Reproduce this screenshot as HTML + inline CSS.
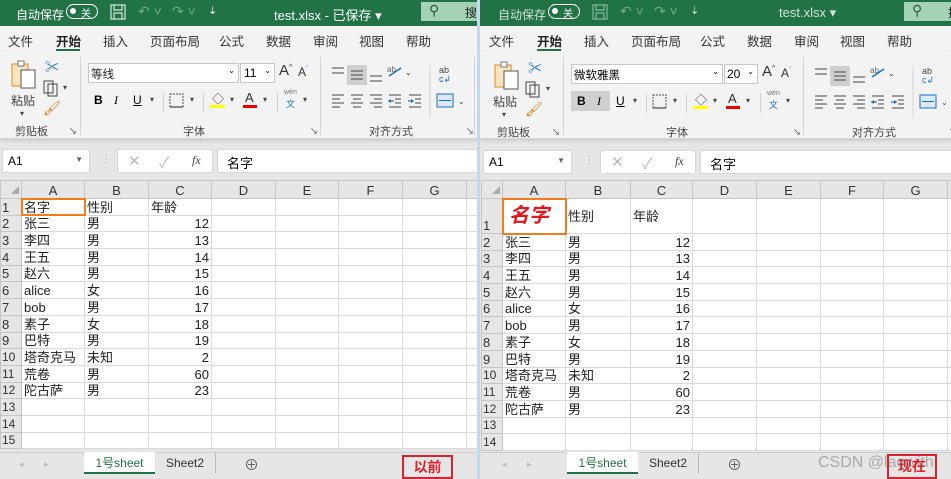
<!DOCTYPE html>
<html><head><meta charset="utf-8"><style>
*{margin:0;padding:0;box-sizing:border-box}
body{width:951px;height:479px;overflow:hidden;background:#fff;font-family:"Liberation Sans","Noto Sans CJK SC",sans-serif;position:relative}
.p{position:absolute;top:0;height:479px;overflow:hidden;background:#e6e6e6}
.a{position:absolute}
.title{left:0;top:0;height:26px;background:#217346;color:#fff;font-size:12px}
.tabs{top:26px;height:26px;background:#f3f3f3;font-size:12.5px;color:#333}
.rib{top:52px;height:87px;background:#f3f3f3;border-bottom:1px solid #d6d6d6;box-shadow:0 2px 3px #ccc}
.gl{font-size:11px;color:#444}
.sep{width:1px;background:#d4d4d4}
.box{background:#fff;border:1px solid #c8c8c8}
table{border-collapse:collapse;table-layout:fixed;position:absolute;left:0;top:180px;background:#fff;font-size:13px}
td{border:1px solid #dadada;padding:0 2px;white-space:nowrap;overflow:visible;color:#222;line-height:15px;vertical-align:bottom}
tr.h td{background:#e6e6e6;text-align:center;color:#333;border-color:#c6c6c6;font-size:13px}
td.r{background:#e6e6e6;text-align:left;color:#333;border-color:#c6c6c6;padding-left:1px}
td.n{text-align:right}
.tabbar{top:452px;height:27px;background:#e6e6e6;border-top:1px solid #cfcfcf}
.ic{stroke:#444;stroke-width:1;fill:none}
</style></head><body>

<!-- LEFT PANEL -->
<div class="p" style="left:0;width:477px">
 <div class="a title" style="width:477px">
  <span class="a" style="left:16px;top:6px">自动保存</span>
  <div class="a" style="left:66px;top:4px;width:32px;height:15px;border:1.5px solid #fff;border-radius:8px"><div class="a" style="left:3px;top:3px;width:6px;height:6px;background:#fff;border-radius:50%"></div><span class="a" style="left:14px;top:0;font-size:10px">关</span></div>
  <svg class="a" style="left:110px;top:4px" width="17" height="17"><rect x="1" y="1" width="14" height="14" fill="none" stroke="#fff"/><rect x="4" y="1" width="8" height="5" fill="none" stroke="#fff"/><rect x="4" y="9" width="8" height="6" fill="none" stroke="#fff"/></svg>
  <span class="a" style="left:138px;top:3px;color:#6fa889;font-size:14px">↶ ˅</span>
  <span class="a" style="left:172px;top:3px;color:#6fa889;font-size:14px">↷ ˅</span>
  <span class="a" style="left:208px;top:4px;font-size:11px">⇣</span>
  <span class="a" style="left:274px;top:5px;font-size:13px">test.xlsx - 已保存 ▾</span>
  <div class="a" style="left:421px;top:2px;width:60px;height:19px;background:#a4d2b5"><span class="a" style="left:8px;top:0;color:#2a5a3d;font-size:14px">⚲</span><span class="a" style="left:44px;top:2px;color:#222;font-size:12px">搜</span></div>
 </div>
 <div class="a tabs" style="left:0;width:477px">
  <span class="a" style="left:8px;top:5px">文件</span><span class="a" style="left:56px;top:5px;font-weight:bold;color:#222">开始</span>
  <div class="a" style="left:56px;top:23px;width:24px;height:2px;background:#217346"></div>
  <span class="a" style="left:103px;top:5px">插入</span><span class="a" style="left:150px;top:5px">页面布局</span><span class="a" style="left:219px;top:5px">公式</span><span class="a" style="left:266px;top:5px">数据</span><span class="a" style="left:313px;top:5px">审阅</span><span class="a" style="left:359px;top:5px">视图</span><span class="a" style="left:406px;top:5px">帮助</span>
 </div>
 <div class="a rib" style="left:0;width:477px">
  <svg class="a" style="left:10px;top:8px" width="28" height="30"><rect x="2" y="4" width="16" height="22" fill="#fbe3c1" stroke="#e08a1e"/><rect x="8" y="1" width="6" height="5" fill="#fff" stroke="#777"/><rect x="11" y="10" width="14" height="18" fill="#fff" stroke="#555"/></svg>
  <span class="a gl" style="left:11px;top:40px;font-size:12px">粘贴</span><span class="a gl" style="left:20px;top:57px;font-size:8px">▾</span>
  <span class="a" style="left:45px;top:5px;font-size:14px;color:#1e6ec0">✂</span>
  <svg class="a" style="left:43px;top:28px" width="16" height="17"><rect x="1" y="1" width="9" height="12" fill="#fff" class="ic"/><rect x="5" y="4" width="9" height="12" fill="#fff" class="ic"/></svg><span class="a gl" style="left:63px;top:31px;font-size:8px">▾</span>
  <span class="a" style="left:43px;top:48px;font-size:14px;color:#e07d12">🖌</span>
  <span class="a gl" style="left:15px;top:71px">剪贴板</span><span class="a gl" style="left:69px;top:74px;font-size:8px">↘</span>
  <div class="a sep" style="left:80px;top:5px;height:78px"></div>
  <div class="a box" style="left:88px;top:11px;width:151px;height:20px;font-size:11.5px;padding:2px 2px"><span style="color:#222">等线</span><span class="a" style="right:3px;top:2px;font-size:8px">⌄</span></div>
  <div class="a box" style="left:240px;top:11px;width:35px;height:20px;font-size:12px;padding:2px 3px">11<span class="a" style="right:3px;top:2px;font-size:8px">⌄</span></div>
  <span class="a" style="left:279px;top:10px;font-size:15px;color:#333">A<sup style="font-size:7px">^</sup></span><span class="a" style="left:298px;top:13px;font-size:12px;color:#333">A<sup style="font-size:7px;color:#1e6ec0">ˇ</sup></span>
  <span class="a" style="left:94px;top:41px;font-size:12px;font-weight:bold">B</span><span class="a" style="left:114px;top:41px;font-size:12px;font-style:italic;font-family:'Liberation Serif'">I</span><span class="a" style="left:133px;top:41px;font-size:12px;text-decoration:underline">U</span><span class="a gl" style="left:150px;top:43px;font-size:8px">▾</span>
  <div class="a sep" style="left:163px;top:40px;height:20px"></div>
  <svg class="a" style="left:169px;top:41px" width="16" height="16"><rect x="1" y="1" width="13" height="13" fill="none" stroke="#555" stroke-dasharray="2 1"/><path d="M1 14H14" stroke="#222"/></svg><span class="a gl" style="left:190px;top:43px;font-size:8px">▾</span>
  <div class="a sep" style="left:203px;top:40px;height:20px"></div>
  <span class="a" style="left:212px;top:38px;font-size:12px;color:#444">◇</span><div class="a" style="left:210px;top:53px;width:15px;height:3px;background:#ffff00"></div><span class="a gl" style="left:230px;top:43px;font-size:8px">▾</span>
  <span class="a" style="left:245px;top:38px;font-size:13px;color:#333">A</span><div class="a" style="left:243px;top:53px;width:14px;height:3px;background:#e00"></div><span class="a gl" style="left:263px;top:43px;font-size:8px">▾</span>
  <div class="a sep" style="left:277px;top:40px;height:20px"></div>
  <span class="a" style="left:284px;top:37px;font-size:7px;color:#777">wén</span><span class="a" style="left:286px;top:45px;font-size:9px;color:#1e6ec0">文</span><span class="a gl" style="left:303px;top:43px;font-size:8px">▾</span>
  <span class="a gl" style="left:183px;top:71px">字体</span><span class="a gl" style="left:310px;top:74px;font-size:8px">↘</span>
  <div class="a sep" style="left:320px;top:5px;height:78px"></div>
  <svg class="a" style="left:329px;top:10px" width="140" height="60">
   <path d="M3 6h12M3 11h12" stroke="#444"/>
   <rect x="18" y="3" width="20" height="20" fill="#cfcfcf"/><path d="M22 9h12M22 13h12M22 17h12" stroke="#444"/>
   <path d="M41 14h12M41 19h12" stroke="#444"/>
   <path d="M60 14l12-8" stroke="#1e6ec0" stroke-width="1.5"/><text x="58" y="10" font-size="8" fill="#666">ab</text><text x="76" y="13" font-size="8" fill="#444">⌄</text>
   <path d="M3 33h12M3 37h8M3 41h12M3 45h8" stroke="#444"/>
   <path d="M22 33h12M24 37h8M22 41h12M24 45h8" stroke="#444"/>
   <path d="M41 33h12M45 37h8M41 41h12M45 45h8" stroke="#444"/>
   <path d="M60 33h12M66 37h6M66 41h6M60 45h12M59 39h6" stroke="#444"/><path d="M59 39l3-2v4z" fill="#1e6ec0"/>
   <path d="M80 33h12M86 37h6M86 41h6M80 45h12M79 39h6" stroke="#444"/><path d="M85 39l-3-2v4z" fill="#1e6ec0"/>
   <path d="M101 3v52" stroke="#d4d4d4"/>
   <text x="110" y="11" font-size="9" fill="#444">ab</text><text x="110" y="20" font-size="9" fill="#1e6ec0">c↲</text>
   <rect x="108" y="32" width="16" height="13" fill="#dbe9f7" stroke="#1e6ec0"/><path d="M110 38.5h12" stroke="#1e6ec0"/><text x="129" y="42" font-size="8" fill="#444">⌄</text>
  </svg>
  <span class="a gl" style="left:369px;top:71px">对齐方式</span><span class="a gl" style="left:466px;top:74px;font-size:8px">↘</span>
  <div class="a sep" style="left:474px;top:5px;height:78px"></div>
 </div>
 <div class="a box" style="left:2px;top:149px;width:88px;height:24px;border-color:#d8d8d8;font-size:12px;padding:4px 5px">A1<span class="a" style="right:6px;top:5px;font-size:8px;color:#666">▼</span></div>
 <span class="a" style="left:101px;top:154px;color:#999;font-size:10px">⋮</span>
 <div class="a box" style="left:117px;top:149px;width:96px;height:24px;border-color:#d8d8d8"><span class="a" style="left:10px;top:2px;color:#bbb;font-size:15px">✕</span><span class="a" style="left:41px;top:2px;color:#bbb;font-size:15px">✓</span><span class="a" style="left:74px;top:3px;color:#444;font-size:12px;font-style:italic;font-family:'Liberation Serif'">fx</span></div>
 <div class="a box" style="left:217px;top:149px;width:262px;height:24px;border-color:#d8d8d8;font-size:13px;padding:3px 9px">名字</div>
 <table style="width:477px">
  <colgroup><col style="width:21px"><col style="width:63px"><col style="width:64px"><col style="width:63px"><col style="width:64px"><col style="width:63px"><col style="width:64px"><col style="width:64px"><col style="width:11px"></colgroup>
  <tr class="h" style="height:18px"><td style="font-size:8px;color:#aaa;text-align:right">◢</td><td>A</td><td>B</td><td>C</td><td>D</td><td>E</td><td>F</td><td>G</td><td></td></tr>
  <tr style="height:16.7px"><td class="r">1</td><td style="outline:2px solid #f07c1e;outline-offset:-1px">名字</td><td>性别</td><td>年龄</td><td></td><td></td><td></td><td></td><td></td></tr>
  <tr style="height:16.7px"><td class="r">2</td><td>张三</td><td>男</td><td class="n">12</td><td></td><td></td><td></td><td></td><td></td></tr>
  <tr style="height:16.7px"><td class="r">3</td><td>李四</td><td>男</td><td class="n">13</td><td></td><td></td><td></td><td></td><td></td></tr>
  <tr style="height:16.7px"><td class="r">4</td><td>王五</td><td>男</td><td class="n">14</td><td></td><td></td><td></td><td></td><td></td></tr>
  <tr style="height:16.7px"><td class="r">5</td><td>赵六</td><td>男</td><td class="n">15</td><td></td><td></td><td></td><td></td><td></td></tr>
  <tr style="height:16.7px"><td class="r">6</td><td>alice</td><td>女</td><td class="n">16</td><td></td><td></td><td></td><td></td><td></td></tr>
  <tr style="height:16.7px"><td class="r">7</td><td>bob</td><td>男</td><td class="n">17</td><td></td><td></td><td></td><td></td><td></td></tr>
  <tr style="height:16.7px"><td class="r">8</td><td>素子</td><td>女</td><td class="n">18</td><td></td><td></td><td></td><td></td><td></td></tr>
  <tr style="height:16.7px"><td class="r">9</td><td>巴特</td><td>男</td><td class="n">19</td><td></td><td></td><td></td><td></td><td></td></tr>
  <tr style="height:16.7px"><td class="r" style="font-size:12px">10</td><td>塔奇克马</td><td>未知</td><td class="n">2</td><td></td><td></td><td></td><td></td><td></td></tr>
  <tr style="height:16.7px"><td class="r" style="font-size:12px">11</td><td>荒卷</td><td>男</td><td class="n">60</td><td></td><td></td><td></td><td></td><td></td></tr>
  <tr style="height:16.7px"><td class="r" style="font-size:12px">12</td><td>陀古萨</td><td>男</td><td class="n">23</td><td></td><td></td><td></td><td></td><td></td></tr>
  <tr style="height:16.7px"><td class="r" style="font-size:12px">13</td><td></td><td></td><td></td><td></td><td></td><td></td><td></td><td></td></tr>
  <tr style="height:16.7px"><td class="r" style="font-size:12px">14</td><td></td><td></td><td></td><td></td><td></td><td></td><td></td><td></td></tr>
  <tr style="height:16.7px"><td class="r" style="font-size:12px">15</td><td></td><td></td><td></td><td></td><td></td><td></td><td></td><td></td></tr>
 </table>
 <div class="a tabbar" style="left:0;width:477px">
  <span class="a" style="left:19px;top:6px;color:#bbb;font-size:9px">◂</span><span class="a" style="left:44px;top:6px;color:#bbb;font-size:9px">▸</span>
  <div class="a" style="left:84px;top:-1px;width:71px;height:22px;background:#fff;border-bottom:2px solid #217346;color:#217346;font-size:12px;text-align:center;line-height:22px">1号sheet</div>
  <span class="a" style="left:166px;top:3px;font-size:12px;color:#333">Sheet2</span>
  <div class="a sep" style="left:215px;top:0;height:20px;background:#bbb"></div>
  <span class="a" style="left:244px;top:1px;font-size:15px;color:#666">⊕</span>
  <div class="a" style="left:402px;top:2px;width:51px;height:24px;border:2px solid #e0202a;color:#e0202a;font-weight:bold;font-size:14px;text-align:center;line-height:20px">以前</div>
 </div>
</div>

<div class="a" style="left:477px;top:0;width:3px;height:479px;background:#c3d8ee"></div>

<!-- RIGHT PANEL -->
<div class="p" style="left:480px;width:471px">
 <div class="a title" style="width:480px;left:-2px">
  <span class="a" style="left:20px;top:6px;color:#cfe3d6">自动保存</span>
  <div class="a" style="left:70px;top:4px;width:32px;height:15px;border:1.5px solid #fff;border-radius:8px"><div class="a" style="left:3px;top:3px;width:6px;height:6px;background:#fff;border-radius:50%"></div><span class="a" style="left:14px;top:0;font-size:10px">关</span></div>
  <svg class="a" style="left:114px;top:4px" width="17" height="17"><rect x="1" y="1" width="14" height="14" fill="none" stroke="#9cc7ad"/><rect x="4" y="1" width="8" height="5" fill="none" stroke="#9cc7ad"/><rect x="4" y="9" width="8" height="6" fill="none" stroke="#9cc7ad"/></svg>
  <span class="a" style="left:142px;top:3px;color:#6fa889;font-size:14px">↶ ˅</span>
  <span class="a" style="left:176px;top:3px;color:#6fa889;font-size:14px">↷ ˅</span>
  <span class="a" style="left:212px;top:4px;font-size:11px;color:#cfe3d6">⇣</span>
  <span class="a" style="left:301px;top:5px;font-size:13px;color:#cfe3d6">test.xlsx ▾</span>
  <div class="a" style="left:426px;top:2px;width:60px;height:19px;background:#a4d2b5"><span class="a" style="left:8px;top:0;color:#2a5a3d;font-size:14px">⚲</span><span class="a" style="left:44px;top:2px;color:#222;font-size:12px">搜</span></div>
 </div>
 <div class="a tabs" style="left:0;width:471px">
  <span class="a" style="left:9px;top:5px">文件</span><span class="a" style="left:57px;top:5px;font-weight:bold;color:#222">开始</span>
  <div class="a" style="left:57px;top:23px;width:24px;height:2px;background:#217346"></div>
  <span class="a" style="left:104px;top:5px">插入</span><span class="a" style="left:151px;top:5px">页面布局</span><span class="a" style="left:220px;top:5px">公式</span><span class="a" style="left:267px;top:5px">数据</span><span class="a" style="left:314px;top:5px">审阅</span><span class="a" style="left:360px;top:5px">视图</span><span class="a" style="left:407px;top:5px">帮助</span>
 </div>
 <div class="a rib" style="left:0;width:471px">
  <svg class="a" style="left:13px;top:9px" width="28" height="30"><rect x="2" y="4" width="16" height="22" fill="#fbe3c1" stroke="#e08a1e"/><rect x="8" y="1" width="6" height="5" fill="#fff" stroke="#777"/><rect x="11" y="10" width="14" height="18" fill="#fff" stroke="#555"/></svg>
  <span class="a gl" style="left:13px;top:41px;font-size:12px">粘贴</span><span class="a gl" style="left:22px;top:58px;font-size:8px">▾</span>
  <span class="a" style="left:48px;top:6px;font-size:14px;color:#1e6ec0">✂</span>
  <svg class="a" style="left:45px;top:29px" width="16" height="17"><rect x="1" y="1" width="9" height="12" fill="#fff" class="ic"/><rect x="5" y="4" width="9" height="12" fill="#fff" class="ic"/></svg><span class="a gl" style="left:66px;top:32px;font-size:8px">▾</span>
  <span class="a" style="left:45px;top:49px;font-size:14px;color:#e07d12">🖌</span>
  <span class="a gl" style="left:17px;top:72px">剪贴板</span><span class="a gl" style="left:72px;top:75px;font-size:8px">↘</span>
  <div class="a sep" style="left:83px;top:5px;height:78px"></div>
  <div class="a box" style="left:91px;top:12px;width:152px;height:20px;font-size:11.5px;padding:2px 2px">微软雅黑<span class="a" style="right:3px;top:2px;font-size:8px">⌄</span></div>
  <div class="a box" style="left:244px;top:12px;width:34px;height:20px;font-size:12px;padding:2px 2px">20<span class="a" style="right:3px;top:2px;font-size:8px">⌄</span></div>
  <span class="a" style="left:282px;top:11px;font-size:15px;color:#333">A<sup style="font-size:7px">^</sup></span><span class="a" style="left:301px;top:14px;font-size:12px;color:#333">A<sup style="font-size:7px;color:#1e6ec0">ˇ</sup></span>
  <div class="a" style="left:91px;top:39px;width:39px;height:20px;background:#d0d0d0"></div>
  <span class="a" style="left:97px;top:42px;font-size:12px;font-weight:bold">B</span><span class="a" style="left:117px;top:42px;font-size:12px;font-style:italic;font-family:'Liberation Serif'">I</span><span class="a" style="left:136px;top:42px;font-size:12px;text-decoration:underline">U</span><span class="a gl" style="left:153px;top:44px;font-size:8px">▾</span>
  <div class="a sep" style="left:166px;top:41px;height:20px"></div>
  <svg class="a" style="left:172px;top:42px" width="16" height="16"><rect x="1" y="1" width="13" height="13" fill="none" stroke="#555" stroke-dasharray="2 1"/><path d="M1 14H14" stroke="#222"/></svg><span class="a gl" style="left:193px;top:44px;font-size:8px">▾</span>
  <div class="a sep" style="left:206px;top:41px;height:20px"></div>
  <span class="a" style="left:215px;top:39px;font-size:12px;color:#444">◇</span><div class="a" style="left:213px;top:54px;width:15px;height:3px;background:#ffff00"></div><span class="a gl" style="left:233px;top:44px;font-size:8px">▾</span>
  <span class="a" style="left:248px;top:39px;font-size:13px;color:#333">A</span><div class="a" style="left:246px;top:54px;width:14px;height:3px;background:#e00"></div><span class="a gl" style="left:266px;top:44px;font-size:8px">▾</span>
  <div class="a sep" style="left:280px;top:41px;height:20px"></div>
  <span class="a" style="left:287px;top:38px;font-size:7px;color:#777">wén</span><span class="a" style="left:289px;top:46px;font-size:9px;color:#1e6ec0">文</span><span class="a gl" style="left:306px;top:44px;font-size:8px">▾</span>
  <span class="a gl" style="left:186px;top:72px">字体</span><span class="a gl" style="left:313px;top:75px;font-size:8px">↘</span>
  <div class="a sep" style="left:323px;top:5px;height:78px"></div>
  <svg class="a" style="left:332px;top:11px" width="140" height="60">
   <path d="M3 6h12M3 11h12" stroke="#444"/>
   <rect x="18" y="3" width="20" height="20" fill="#cfcfcf"/><path d="M22 9h12M22 13h12M22 17h12" stroke="#444"/>
   <path d="M41 14h12M41 19h12" stroke="#444"/>
   <path d="M60 14l12-8" stroke="#1e6ec0" stroke-width="1.5"/><text x="58" y="10" font-size="8" fill="#666">ab</text><text x="76" y="13" font-size="8" fill="#444">⌄</text>
   <path d="M3 33h12M3 37h8M3 41h12M3 45h8" stroke="#444"/>
   <path d="M22 33h12M24 37h8M22 41h12M24 45h8" stroke="#444"/>
   <path d="M41 33h12M45 37h8M41 41h12M45 45h8" stroke="#444"/>
   <path d="M60 33h12M66 37h6M66 41h6M60 45h12M59 39h6" stroke="#444"/><path d="M59 39l3-2v4z" fill="#1e6ec0"/>
   <path d="M80 33h12M86 37h6M86 41h6M80 45h12M79 39h6" stroke="#444"/><path d="M85 39l-3-2v4z" fill="#1e6ec0"/>
   <path d="M101 3v52" stroke="#d4d4d4"/>
   <text x="110" y="11" font-size="9" fill="#444">ab</text><text x="110" y="20" font-size="9" fill="#1e6ec0">c↲</text>
   <rect x="108" y="32" width="16" height="13" fill="#dbe9f7" stroke="#1e6ec0"/><path d="M110 38.5h12" stroke="#1e6ec0"/><text x="129" y="42" font-size="8" fill="#444">⌄</text>
  </svg>
  <span class="a gl" style="left:372px;top:72px">对齐方式</span><span class="a gl" style="left:469px;top:75px;font-size:8px">↘</span>
 </div>
 <div class="a box" style="left:3px;top:150px;width:89px;height:24px;border-color:#d8d8d8;font-size:12px;padding:4px 5px">A1<span class="a" style="right:6px;top:5px;font-size:8px;color:#666">▼</span></div>
 <span class="a" style="left:104px;top:155px;color:#999;font-size:10px">⋮</span>
 <div class="a box" style="left:120px;top:150px;width:96px;height:24px;border-color:#d8d8d8"><span class="a" style="left:10px;top:2px;color:#bbb;font-size:15px">✕</span><span class="a" style="left:41px;top:2px;color:#bbb;font-size:15px">✓</span><span class="a" style="left:74px;top:3px;color:#444;font-size:12px;font-style:italic;font-family:'Liberation Serif'">fx</span></div>
 <div class="a box" style="left:220px;top:150px;width:260px;height:24px;border-color:#d8d8d8;font-size:13px;padding:3px 9px">名字</div>
 <table style="width:471px;left:1px">
  <colgroup><col style="width:21px"><col style="width:63px"><col style="width:65px"><col style="width:62px"><col style="width:64px"><col style="width:64px"><col style="width:63px"><col style="width:64px"><col style="width:5px"></colgroup>
  <tr class="h" style="height:18px"><td style="font-size:8px;color:#aaa;text-align:right">◢</td><td>A</td><td>B</td><td>C</td><td>D</td><td>E</td><td>F</td><td>G</td><td></td></tr>
  <tr style="height:35px"><td class="r">1</td><td style="outline:2px solid #f07c1e;outline-offset:-1px;vertical-align:middle;color:#e8141b;font-weight:bold;font-style:italic;font-size:20px;line-height:26px;padding-left:6px">名字</td><td style="vertical-align:middle">性别</td><td style="vertical-align:middle">年龄</td><td></td><td></td><td></td><td></td><td></td></tr>
  <tr style="height:16.7px"><td class="r">2</td><td>张三</td><td>男</td><td class="n">12</td><td></td><td></td><td></td><td></td><td></td></tr>
  <tr style="height:16.7px"><td class="r">3</td><td>李四</td><td>男</td><td class="n">13</td><td></td><td></td><td></td><td></td><td></td></tr>
  <tr style="height:16.7px"><td class="r">4</td><td>王五</td><td>男</td><td class="n">14</td><td></td><td></td><td></td><td></td><td></td></tr>
  <tr style="height:16.7px"><td class="r">5</td><td>赵六</td><td>男</td><td class="n">15</td><td></td><td></td><td></td><td></td><td></td></tr>
  <tr style="height:16.7px"><td class="r">6</td><td>alice</td><td>女</td><td class="n">16</td><td></td><td></td><td></td><td></td><td></td></tr>
  <tr style="height:16.7px"><td class="r">7</td><td>bob</td><td>男</td><td class="n">17</td><td></td><td></td><td></td><td></td><td></td></tr>
  <tr style="height:16.7px"><td class="r">8</td><td>素子</td><td>女</td><td class="n">18</td><td></td><td></td><td></td><td></td><td></td></tr>
  <tr style="height:16.7px"><td class="r">9</td><td>巴特</td><td>男</td><td class="n">19</td><td></td><td></td><td></td><td></td><td></td></tr>
  <tr style="height:16.7px"><td class="r" style="font-size:12px">10</td><td>塔奇克马</td><td>未知</td><td class="n">2</td><td></td><td></td><td></td><td></td><td></td></tr>
  <tr style="height:16.7px"><td class="r" style="font-size:12px">11</td><td>荒卷</td><td>男</td><td class="n">60</td><td></td><td></td><td></td><td></td><td></td></tr>
  <tr style="height:16.7px"><td class="r" style="font-size:12px">12</td><td>陀古萨</td><td>男</td><td class="n">23</td><td></td><td></td><td></td><td></td><td></td></tr>
  <tr style="height:16.7px"><td class="r" style="font-size:12px">13</td><td></td><td></td><td></td><td></td><td></td><td></td><td></td><td></td></tr>
  <tr style="height:16.7px"><td class="r" style="font-size:12px">14</td><td></td><td></td><td></td><td></td><td></td><td></td><td></td><td></td></tr>
 </table>
 <div class="a tabbar" style="left:0;width:471px">
  <span class="a" style="left:22px;top:6px;color:#bbb;font-size:9px">◂</span><span class="a" style="left:47px;top:6px;color:#bbb;font-size:9px">▸</span>
  <div class="a" style="left:87px;top:-1px;width:71px;height:22px;background:#fff;border-bottom:2px solid #217346;color:#217346;font-size:12px;text-align:center;line-height:22px">1号sheet</div>
  <span class="a" style="left:169px;top:3px;font-size:12px;color:#333">Sheet2</span>
  <div class="a sep" style="left:218px;top:0;height:20px;background:#bbb"></div>
  <span class="a" style="left:247px;top:1px;font-size:15px;color:#666">⊕</span>
  <span class="a" style="left:338px;top:1px;font-size:16px;color:#aaa;white-space:nowrap">CSDN @laowith</span>
  <div class="a" style="left:407px;top:1px;width:50px;height:25px;border:2px solid #e0202a;color:#e0202a;font-weight:bold;font-size:14px;text-align:center;line-height:21px">现在</div>
 </div>
</div>
</body></html>
